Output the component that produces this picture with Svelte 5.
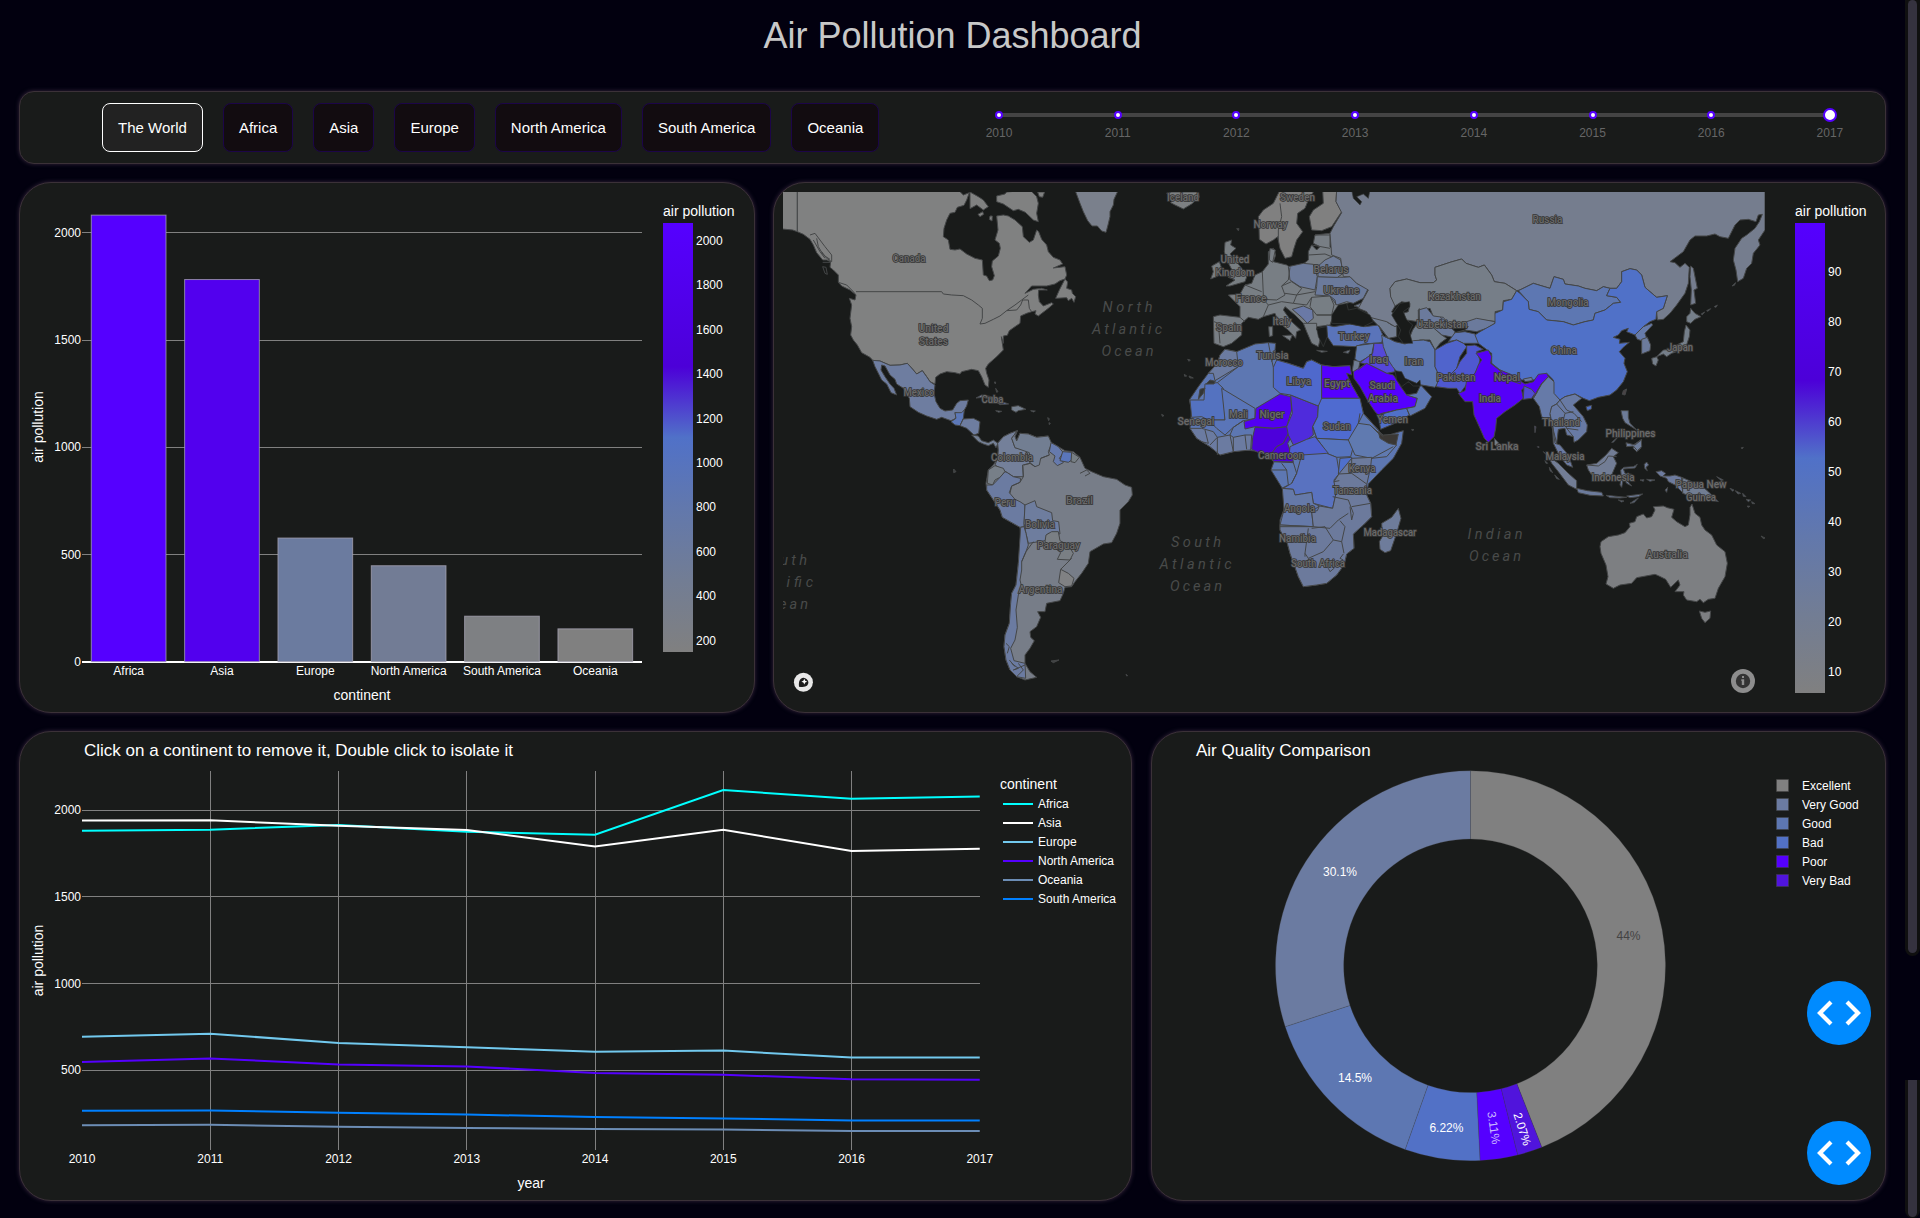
<script>
  const regions = ['The World', 'Africa', 'Asia', 'Europe', 'North America', 'South America', 'Oceania'];
  const years = [2010, 2011, 2012, 2013, 2014, 2015, 2016, 2017];
  let selected = $state('The World');

  // Bar chart
  const y0 = 661.7;
  const perUnit = 0.2147;
  const bars = [
    { name: 'Africa', value: 2080, color: '#5500ff' },
    { name: 'Asia', value: 1780, color: '#5200ee' },
    { name: 'Europe', value: 576, color: '#6b7b9f' },
    { name: 'North America', value: 447, color: '#727c95' },
    { name: 'South America', value: 212, color: '#7e8083' },
    { name: 'Oceania', value: 153, color: '#808080' }
  ];
  const barScale = [2000, 1800, 1600, 1400, 1200, 1000, 800, 600, 400, 200];
  const mapScale = [90, 80, 70, 60, 50, 40, 30, 20, 10];

  // Line chart
  const lx = (i) => 82 + i * 128.25;
  const lines = [
    { name: 'Africa', color: '#00ffff', y: [830.7, 829.7, 825, 831.7, 834.7, 790, 798.7, 796.4] },
    { name: 'Asia', color: '#ffffff', y: [820.5, 820.3, 825.7, 830, 846.6, 829.8, 851, 848.8] },
    { name: 'Europe', color: '#72c9ee', y: [1036.7, 1033.7, 1043, 1047.3, 1051.7, 1050.6, 1057.4, 1057.4] },
    { name: 'North America', color: '#5500ff', y: [1062, 1058.4, 1064.4, 1066.4, 1073, 1074.7, 1079.3, 1079.8] },
    { name: 'Oceania', color: '#6c8db5', y: [1125.3, 1124.7, 1126.7, 1128, 1129, 1129.4, 1131, 1131] },
    { name: 'South America', color: '#0080ff', y: [1110.7, 1110.4, 1112.7, 1114.6, 1117, 1118.4, 1120.4, 1120.4] }
  ];
  const pts = (ys) => ys.map((y, i) => `${lx(i)},${y}`).join(' ');

  // Donut, clockwise from twelve o'clock
  const slices = [
    { n: 85, color: '#808080', label: '44%', x: 1628.5, y: 940, fill: '#444' },
    { n: 4, color: '#5014dc', label: '2.07%', x: 1522.5, y: 1129, rot: 72.1 },
    { n: 6, color: '#5500ff', label: '3.11%', x: 1494, y: 1127.7, rot: 81.5, fill: '#c9b8ff' },
    { n: 12, color: '#5271c6', label: '6.22%', x: 1446.4, y: 1132 },
    { n: 28, color: '#5d77b2', label: '14.5%', x: 1355, y: 1082 },
    { n: 58, color: '#6b7ba1', label: '30.1%', x: 1340, y: 876 }
  ];
  const quality = [
    ['Excellent', '#808080'], ['Very Good', '#6b7ba1'], ['Good', '#5d77b2'],
    ['Bad', '#5271c6'], ['Poor', '#5500ff'], ['Very Bad', '#5014dc']
  ];
  const cx = 1470.5, cy = 965.8, R = 195, r = 126.8;
  let acc = 0;
  const arcs = slices.map((s) => {
    const a = (acc / 193) * 2 * Math.PI;
    acc += s.n;
    const b = (acc / 193) * 2 * Math.PI;
    const p = (q, t) => `${(cx + q * Math.sin(t)).toFixed(2)} ${(cy - q * Math.cos(t)).toFixed(2)}`;
    return { ...s, d: `M${p(R, a)}A${R} ${R} 0 0 1 ${p(R, b)}L${p(r, b)}A${r} ${r} 0 0 0 ${p(r, a)}Z` };
  });

  // Map shapes: each sheet has its own origin and is drawn at three units per pixel
  const sheets = [
    { x: 770, y: 180, shapes: [
      ['#808181', '36,30 82,30 82,155 68,150 36,147'],
      ['#808181', '82,30 565,30 580,45 598,38 590,60 582,76 562,82 555,97 540,100 530,120 522,145 520,170 535,180 540,208 555,210 570,207 590,222 615,235 637,240 640,285 650,288 658,302 668,300 673,287 665,260 667,243 685,228 691,205 688,190 675,180 684,150 680,108 700,105 715,108 735,120 757,140 760,170 778,187 790,180 800,150 806,155 815,178 830,195 835,215 850,232 870,240 878,252 850,264 885,260 890,285 885,297 870,302 855,312 830,318 785,318 765,340 790,328 815,325 832,330 806,330 805,345 808,365 820,378 845,368 850,372 835,385 805,408 795,402 798,392 785,395 770,400 752,408 750,430 735,440 718,452 712,466 700,468 700,490 694,470 700,510 680,530 655,552 647,565 650,580 657,600 655,622 645,615 635,590 625,572 605,568 575,575 570,582 555,578 530,575 510,582 497,592 495,612 480,605 470,590 457,572 440,582 430,570 412,550 390,555 360,556 330,543 308,541 300,532 275,518 262,495 250,480 242,465 245,440 240,415 245,375 238,355 255,360 258,345 240,330 215,318 205,307 205,285 190,270 180,262 182,245 170,240 158,240 140,218 130,195 120,178 100,163 82,155'],
      ['#808181', '885,297 893,306 890,325 905,330 907,340 917,350 912,367 905,355 895,362 890,353 857,355 868,330'],
      ['#808181', '680,48 705,42 710,36 780,30 800,50 805,70 800,100 805,125 790,120 766,97 745,88 730,92 700,72 680,65'],
      ['#808181', '600,36 625,50 640,60 655,80 640,90 620,75 600,86'],
      ['#808181', '803,36 824,36 818,52 808,50'],
      ['#808181', '624,103 638,95 641,103 630,110'], ['#808181', '660,108 667,108 666,123 658,118'],
      ['#7a808c', '915,30 1045,30 1032,58 1030,75 1020,95 1020,110 1014,135 1010,150 1008,157 995,153 982,138 966,138 953,122 940,95 930,70'],
      ['#6e7da0', '308,541 330,543 360,556 390,555 412,550 430,570 440,582 457,572 470,590 480,605 495,615 492,640 498,665 510,685 525,693 548,690 560,670 570,662 595,660 590,678 580,695 575,705 555,697 558,715 543,722 515,712 500,718 470,708 445,697 420,680 418,655 400,625 380,612 375,598 360,585 345,558 335,555 333,570 345,590 360,612 372,625 380,645 363,638 350,612 335,600 325,580 315,560'],
      ['#5c78b8', '543,725 558,715 555,698 575,698 583,690 580,715 570,737 555,735'],
      ['#6e7da0', '570,737 580,717 610,715 630,725 626,760 612,765 590,745'],
      ['#737f94', '605,765 625,768 635,782 655,788 670,780 684,790 678,803 670,790 655,797 640,792 625,785'],
      ['#6d7ba2', '618,654 635,645 665,650 692,664 716,672 690,674 672,662 640,652'],
      ['#75808f', '725,680 745,677 768,688 745,692 738,697 725,690'],
      ['#75808f', '677,692 695,694 686,697'], ['#75808f', '782,692 796,693 790,696'],
      ['#3f4242', '673,606 677,606 676,612'], ['#3f4242', '677,625 684,635 680,637'], ['#3f4242', '833,713 838,716 836,722'], ['#3f4242', '837,728 841,730 838,734']
    ] },
    { x: 770, y: 430, shapes: [
      ['#777d88', '683,40 700,20 720,10 742,2 735,20 740,33 750,10 775,12 800,22 835,18 840,35 865,50 885,62 910,65 930,82 945,115 965,125 1000,140 1040,148 1065,165 1085,172 1087,195 1075,215 1050,240 1050,280 1040,310 1025,338 1000,342 960,365 955,400 935,430 915,455 905,470 885,472 880,490 870,512 830,520 825,545 803,545 812,562 800,590 780,605 782,622 793,632 780,655 765,675 765,700 780,725 800,742 765,750 740,740 720,720 708,690 702,650 705,615 718,580 722,520 725,490 738,465 745,400 752,320 750,292 720,275 697,262 690,240 670,210 650,180 648,160 655,120 670,105 683,85 685,60'],
      ['#74809a', '683,40 700,20 720,10 742,2 725,25 735,53 765,60 778,85 780,100 758,105 760,140 730,140 712,128 675,105 683,85 685,60'],
      ['#727e92', '742,2 735,20 740,33 750,10 775,12 800,22 835,18 845,40 835,65 838,75 812,85 808,105 795,110 780,98 778,68 735,53 725,25'],
      ['#777f88', '655,120 675,107 700,115 705,125 690,142 675,150 668,165 652,160'],
      ['#6b7ba1', '650,165 668,165 690,142 705,125 712,128 730,140 752,145 750,157 725,168 718,188 735,208 750,215 765,225 762,290 750,292 720,275 697,262 690,240 670,210 650,180'],
      ['#6e7d9e', '765,225 795,212 800,230 845,248 848,272 866,275 870,312 835,310 825,332 775,340 768,310 762,280'],
      ['#6b7ba1', '752,292 762,290 768,310 775,345 768,365 755,395 755,420 750,450 756,475 745,495 738,540 742,592 735,630 722,655 732,692 765,700 767,745 740,740 720,720 708,690 702,650 705,615 718,580 722,520 725,490 738,465 745,400'],
      ['#667aad', '843,38 865,50 880,68 868,85 880,98 862,107 850,95 855,78 838,65'],
      ['#5a76bb', '878,65 905,67 905,90 895,97 870,92'],
      ['#777f84', '905,67 928,82 915,98 903,95'],
      ['#808183', '872,418 895,430 912,445 905,468 885,470 866,458'],
      ['#7a7f84', '828,315 845,305 865,305 870,332 895,345 910,370 900,390 862,388 872,368 850,350 825,335'],
      ['#3f4242', '551,117 558,125 551,128'], ['#3f4242', '843,693 867,690 850,698'], ['#3f4242', '1068,733 1073,737 1070,738']
    ] },
    { x: 1130, y: 180, shapes: [
      ['#7d8082', '110,40 125,36 205,36 208,52 185,72 160,87 135,75 122,68 130,58'],
      ['#808080', '545,30 450,30 430,70 400,90 385,110 387,140 388,178 408,192 430,180 443,170 450,205 465,235 485,230 492,205 500,180 518,155 500,130 503,100 525,85 535,60 550,36'],
      ['#808080', '578,30 620,30 618,65 635,95 605,140 575,152 545,150 538,110 550,90 580,70'],
      ['#787e82', '285,187 305,180 302,195 318,205 300,222 315,240 335,265 352,285 345,305 300,318 288,318 315,300 295,292 305,268 290,240 283,215'],
      ['#787e82', '245,258 268,245 275,265 265,288 242,297 250,275'],
      ['#787e84', '295,345 330,342 345,315 365,310 375,285 397,275 415,252 415,215 430,205 437,225 430,245 470,255 480,262 520,252 535,240 535,215 545,195 560,210 570,200 550,190 555,165 600,160 600,200 635,235 640,265 660,290 715,325 700,355 650,370 620,400 605,420 600,435 560,440 560,450 575,460 565,500 545,490 530,455 520,430 495,405 465,380 460,390 485,425 512,450 500,455 497,475 480,455 445,425 435,400 400,410 385,418 355,412 335,430 335,465 305,490 280,500 252,490 250,410 270,405 330,412 330,380 315,365'],
      ['#6d7b9a', '475,260 520,250 550,253 562,290 555,330 510,320 480,300'],
      ['#6b7a9b', '562,290 640,292 660,290 680,310 715,325 700,355 670,370 650,365 620,375 600,348 555,345 560,320'],
      ['#6f7c98', '585,240 610,228 632,240 640,280 622,292 565,290 560,262'],
      ['#777e84', '545,352 600,348 612,375 605,405 560,405 540,380'],
      ['#6a79a6', '487,388 520,378 548,390 550,415 532,430 515,412'],
      ['#787e84', '420,205 436,210 428,247 418,240'],
      ['#787e84', '458,467 487,465 480,482'], ['#787e84', '416,440 428,440 428,467 418,470'],
      ['#787e84', '560,511 592,514 575,517'], ['#737e90', '640,517 660,510 655,520'],
      ['#717c93', '672,378 700,366 690,383'],
      ['#5a74ba', '590,435 612,440 660,432 705,440 745,435 760,468 755,488 700,492 675,500 640,498 610,497 592,470'],
      ['#727d90', '720,412 755,415 785,435 800,440 800,470 775,475 745,437'],
      ['#607ab0', '680,497 732,490 725,525 685,548 675,535'],
      ['#5548d8', '732,490 765,490 775,525 790,545 795,575 770,580 720,555 690,548 728,520'],
      ['#707d92', '667,570 672,540 690,545 685,570 672,580'],
      ['#5500ff', '670,575 710,550 770,580 790,585 800,600 812,620 830,645 862,655 855,680 800,690 755,700 745,705 735,695 715,665 690,620 672,595'],
      ['#5070c8', '745,705 800,690 830,685 838,705 795,730 752,748'],
      ['#5d77b2', '830,645 860,640 872,615 905,650 885,685 840,708 830,685 855,680 862,655'],
      ['#5d77b2', '235,580 262,550 270,525 285,508 320,515 375,492 415,488 437,490 435,510 440,540 475,550 520,565 530,545 545,540 575,555 610,560 660,557 645,575 665,615 690,660 700,700 745,750 760,770 820,752 815,790 790,835 755,870 715,912 710,945 722,970 725,1010 700,1035 670,1062 672,1105 650,1122 642,1155 620,1185 590,1210 560,1215 520,1220 505,1190 480,1120 472,1090 450,1050 450,1020 465,980 460,930 423,870 432,845 395,815 345,810 310,815 270,825 240,800 200,775 180,745 185,690 178,660 205,620'],
      ['#6b7ba1', '235,580 262,550 270,525 285,508 320,515 325,560 255,602 250,580'],
      ['#5472c0', '180,660 222,660 225,612 262,608 280,625 285,720 235,720 215,710 185,712'],
      ['#333534', '205,658 210,628 225,624 220,640'], ['#333534', '228,612 240,600 256,604 252,612'],
      ['#5a75b8', '275,625 375,685 375,715 340,722 310,742 285,765 260,745 235,720 285,720'],
      ['#6b7ba1', '180,745 215,745 250,755 262,772 300,765 310,772 345,765 365,765 362,810 310,815 270,825 240,800 200,775'],
      ['#5200f2', '378,685 450,642 482,650 485,690 470,740 430,745 375,740 345,747 342,725 375,715'],
      ['#4d00db', '375,742 430,745 470,740 478,755 460,790 440,800 425,820 390,820 365,808 368,772'],
      ['#4d00db', '478,755 482,775 473,790 488,835 490,848 430,845 425,820 440,800 460,790'],
      ['#4f2bdc', '482,645 565,678 563,710 548,740 550,765 530,780 490,795 475,765 470,740 487,700'],
      ['#4f69cc', '430,562 440,540 475,550 520,565 530,545 545,540 575,555 575,675 565,678 482,645 450,640 430,622'],
      ['#5500ff', '575,555 610,560 660,557 665,585 650,580 665,615 688,655 575,655'],
      ['#4f6bd0', '575,655 690,655 700,700 685,730 670,765 655,780 560,775 548,740 563,710 565,678'],
      ['#5674be', '560,775 655,780 670,800 662,830 620,832 590,820 575,795'],
      ['#4f60d0', '480,800 530,778 555,770 575,795 595,820 540,828 490,832 478,820'],
      ['#607ab0', '685,730 720,735 750,765 800,795 770,830 725,835 675,825 655,780'],
      ['#3a3734', '745,755 760,765 805,762 798,795 775,790 750,775'],
      ['#5972c0', '515,825 590,820 620,832 628,880 612,900 618,940 608,985 550,970 545,937 515,942 495,945 490,928 460,925 485,910 500,880'],
      ['#4f70cc', '630,835 665,832 660,880 625,882'],
      ['#6579a8', '457,925 490,928 495,945 515,942 545,937 550,970 568,978 545,995 550,1040 450,1035 462,990'],
      ['#6c7a9c', '568,978 608,985 618,940 612,905 628,880 665,835 725,832 722,860 710,915 710,945 722,970 725,1010 700,1035 670,1062 672,1105 650,1122 642,1155 620,1185 590,1210 560,1215 520,1220 505,1190 480,1120 472,1090 450,1050 450,1035 550,1040 545,995 562,992'],
      ['#6e7c9b', '805,985 813,1015 800,1060 782,1112 765,1118 750,1108 748,1085 757,1070 755,1030 785,1012'],
      ['#3f4242', '173,538 181,540 177,544'], ['#3f4242', '163,583 170,588 164,589'], ['#3f4242', '177,588 190,594 180,594'], ['#3f4242', '95,703 102,707 97,709'], ['#3f4242', '320,146 327,146 325,152'], ['#3f4242', '845,748 852,749 847,752']
    ] },
    { x: 1450, y: 180, shapes: [
      ['#757d8e', '-340,30 945,30 945,150 925,180 930,195 910,220 905,250 890,265 880,295 863,305 858,270 850,240 855,205 875,175 890,165 915,145 928,125 937,103 925,105 918,125 895,118 870,120 855,135 835,175 810,170 795,162 770,168 735,168 720,180 700,215 680,230 660,245 675,248 690,262 705,250 718,262 716,290 715,310 705,340 680,375 660,400 640,418 622,420 620,395 640,385 652,347 620,352 600,335 585,322 575,285 560,270 540,266 515,275 515,305 500,325 480,325 460,320 440,332 405,325 385,318 345,312 340,298 312,290 300,325 250,310 210,330 200,332 165,310 133,305 125,285 103,255 85,262 48,250 35,237 0,247 -45,262 -45,285 -40,300 -50,308 -90,308 -130,297 -165,305 -180,325 -178,350 -160,370 -175,395 -150,430 -165,440 -190,425 -240,412 -250,395 -275,385 -245,330 -280,310 -300,290 -320,290 -328,235 -355,225 -360,160 -350,140 -325,98 -342,65'],
      ['#767e88', '-180,325 -165,305 -130,297 -90,308 -50,308 -40,300 -45,285 -45,262 0,247 35,237 48,250 85,262 103,255 125,285 133,305 165,310 200,332 185,358 160,362 158,390 135,395 140,425 80,418 55,440 10,445 -20,415 -50,410 -60,385 -95,390 -95,425 -130,420 -140,400 -125,395 -120,370 -145,365 -165,378 -178,350'],
      ['#6b7a9c', '-95,390 -70,383 -50,408 -20,412 0,440 15,455 10,472 -25,465 -65,430 -92,425'],
      ['#737e8d', '-95,425 -65,430 -25,465 -10,475 -30,490 -45,510 -60,480 -90,480 -115,490 -120,470 -112,450'],
      ['#6b7a9c', '10,440 50,425 80,415 135,425 135,430 110,445 80,455 45,450 55,440'],
      ['#5f76b4', '15,458 45,455 75,462 88,490 40,490 20,480 -5,485'],
      ['#5d77b2', '-205,465 -165,485 -135,492 -110,482 -80,480 -60,485 -45,510 -45,560 -35,582 -30,600 -45,622 -85,615 -110,608 -130,605 -160,575 -172,560 -185,540 -200,500'],
      ['#5064cc', '-45,510 -10,490 20,480 40,490 50,500 30,530 20,565 0,585 -35,582 -45,560'],
      ['#4f58d0', '50,497 75,495 100,508 80,515 90,540 85,560 75,580 60,600 45,620 30,640 20,625 -5,625 -42,620 -35,600 -35,582 0,585 20,565 30,545 50,520'],
      ['#5d77b2', '205,332 250,310 300,325 312,290 340,298 345,312 385,318 405,325 440,332 460,320 480,325 470,347 500,352 512,367 490,370 465,390 435,400 430,420 405,425 370,435 340,425 290,420 265,395 237,388 235,365'],
      ['#5071c8', '200,332 210,340 235,365 237,388 265,395 290,420 340,425 370,435 405,425 430,420 435,400 465,390 490,370 512,367 500,352 470,347 480,325 500,325 515,305 515,275 540,266 560,270 575,285 585,322 600,335 620,352 652,347 640,385 620,395 618,418 600,425 580,440 555,465 530,455 535,445 515,452 505,465 490,472 510,478 508,490 538,487 520,502 508,515 525,535 522,550 532,575 520,605 500,630 480,645 445,652 418,662 400,655 375,642 345,650 330,660 310,640 310,600 290,580 250,600 215,600 180,585 150,570 125,550 125,520 105,505 85,490 75,465 90,455 135,430 135,400 158,390 160,365 185,358'],
      ['#5071c8', '408,680 425,676 424,687 412,692'], ['#4a4446', '520,632 530,627 525,645 517,643'],
      ['#667bab', '555,465 580,440 605,430 608,435 585,460 590,475 575,482 562,478'],
      ['#6c7b9c', '575,478 592,472 602,495 600,512 575,522'],
      ['#757f8a', '722,385 735,400 753,410 735,418 722,430 710,425 710,410 720,400'],
      ['#757f8a', '708,435 720,450 718,470 708,500 690,512 665,520 650,530 640,522 620,530 640,510 665,508 680,495 700,485 703,455'],
      ['#757f8a', '605,535 620,530 625,540 618,558 608,552'],
      ['#757d8e', '722,258 730,265 742,325 732,330 737,370 722,375 724,330 720,290'],
      ['#757f88', '846,318 857,308 853,316'], ['#757f88', '770,392 782,386 774,394'], ['#757f88', '793,380 802,375 798,382'], ['#757f88', '754,402 764,396 757,404'],
      ['#5500f8', '78,520 115,510 125,530 122,550 150,572 165,590 215,605 225,612 250,605 265,583 290,580 295,590 275,610 260,635 252,655 245,635 225,620 215,630 220,655 195,675 165,695 140,715 137,745 132,770 115,787 103,775 90,745 72,705 68,665 45,665 25,640 45,632 50,600 75,580 85,555 95,540'],
      ['#5200f0', '150,570 180,582 213,597 212,612 170,598'],
      ['#6c7ba0', '220,597 245,592 248,602 225,605'],
      ['#504cd0', '222,618 245,628 255,640 245,655 220,658'],
      ['#667aa8', '295,590 312,605 312,640 330,660 320,672 305,680 300,705 310,740 318,780 325,820 312,790 308,750 300,715 290,720 275,710 268,680 250,655 262,635 275,612'],
      ['#687aa4', '330,660 345,650 375,642 395,655 370,675 400,710 412,735 410,755 385,780 372,787 370,770 350,765 345,745 325,748 320,790 310,750 300,700 305,680 320,672'],
      ['#74808c', '133,775 147,790 140,800 134,795'],
      ['#6e7c98', '513,692 535,692 535,712 540,730 560,750 525,728 518,715'], ['#6e7c98', '550,795 575,778 572,805 560,815 550,805'],
      ['#6e7c98', '485,787 507,768 490,787'],
      ['#4a3a88', '254,738 258,740 255,758'], ['#4a3a88', '262,800 267,800 266,804']
    ] },
    { x: 1500, y: 430, shapes: [
      ['#727d95', '130,65 150,82 175,100 205,130 230,152 230,178 205,165 175,125 155,100 145,80'],
      ['#6a7aa2', '158,-10 165,40 180,45 205,75 218,112 200,105 180,80 160,40'],
      ['#6c7b9c', '230,175 262,182 305,187 310,198 270,196 235,188'],
      ['#727d95', '260,105 290,100 318,75 335,55 355,68 340,80 350,100 335,135 300,145 275,135 265,120'],
      ['#6e7c98', '378,38 405,45 424,30 425,50 412,62 400,48 380,50'],
      ['#6c7a98', '362,120 372,112 400,110 412,103 405,114 370,117 375,130 395,133 378,138 380,150 395,168 380,160 370,145 365,172 360,165 364,140'],
      ['#6c7a98', '318,196 340,198 360,200 380,202 360,204 330,203'], ['#6c7a98', '380,198 428,192 415,200 390,203'], ['#6c7a98', '390,220 405,210 415,204 402,218'], ['#6c7a98', '355,210 372,213 365,216'],
      ['#6c7a98', '433,103 440,96 446,105 438,112 442,122 434,115'], ['#6c7a98', '420,150 432,149 430,154'], ['#6c7a98', '440,148 465,150 450,154'], ['#6c7a98', '495,180 503,172 500,187'],
      ['#6d7b9e', '468,125 485,122 497,130 490,138 510,138 525,135 545,142 548,188 525,165 505,155 500,145 480,138'],
      ['#717d92', '545,142 575,155 610,172 625,185 655,215 630,210 600,192 570,198 548,190'],
      ['#6c7a98', '625,160 655,165 665,150 668,158 650,172'], ['#6c7a98', '650,140 670,150 662,150'],
      ['#626c7c', '690,175 702,180 698,184'], ['#626c7c', '706,182 722,190 714,192'], ['#626c7c', '728,190 738,200 730,199'], ['#626c7c', '738,208 752,210 745,215'], ['#626c7c', '755,215 765,221 757,221'], ['#626c7c', '742,228 750,229 744,232'],
      ['#3f4242', '783,318 795,324 790,326'], ['#3f4242', '724,53 730,52 726,57'],
      ['#626c7c', '135,92 143,100 138,100'], ['#626c7c', '148,112 158,128 150,122'], ['#626c7c', '164,135 178,148 170,146'],
      ['#7d7f82', '303,335 325,320 355,315 375,308 390,290 388,280 405,275 410,260 430,252 440,264 455,260 465,240 460,230 490,228 502,233 522,238 515,262 530,275 555,290 565,285 570,255 570,232 576,222 585,250 600,262 605,285 615,300 635,315 650,345 675,365 682,400 675,440 655,475 645,505 625,508 610,518 600,508 590,515 560,510 550,495 552,485 525,485 540,465 535,450 512,472 497,448 475,437 465,433 410,443 395,460 360,465 340,475 318,462 324,440 318,405 303,370 300,350'],
      ['#7d7f82', '598,543 615,547 632,543 630,565 615,578 605,565']
    ] }
  ];

  // Land borders that cross a filled shape, and inland or coastal water laid over it
  const borders = [
    { x: 770, y: 180, d: 'M258 335H515L520 342 545 345 580 347 605 360 625 375 637 385V415L630 432 645 430 670 418 690 408 710 392 735 375 755 360 775 345M710 392 740 390 752 375 758 360 775 360 778 385 785 395M120 165 135 160 150 180 165 200 185 225V245L170 235 155 215M130 180 150 215 165 235M140 175 145 200 160 225 180 238M205 307 230 315 250 335 258 345M158 260 165 280 172 283 168 262ZM158 247H182' },
    { x: 770, y: 430, d: 'M762 105 780 100 795 110M812 85 838 75M720 190 725 168 750 157 760 140 758 105M755 395 768 365 790 335M872 418 905 385M930 130 950 120 960 130 945 138M725 700 745 715 730 720 765 705M740 740 760 720 745 700M708 640 718 650 712 670M718 690 735 710' },
    { x: 1130, y: 180, d: 'M450 70 455 110 445 150 445 180M480 262 475 300 455 318 465 345 440 360 400 358M397 275 400 345 415 360M345 315 395 335M400 358 415 375 400 410M270 490 265 430 252 425M330 412 345 425M455 318 485 305 515 325 500 345 465 340M500 345 555 335M415 375 455 365 490 370M490 370 500 345M490 370 530 375 545 352M535 225 585 222 605 230M545 195 600 205M560 405 605 405M520 430 560 430 560 440M555 165 600 165M600 348 615 360 618 375M415 488 425 540 430 562M437 510 425 545M262 608 325 560M310 772V815M300 765 310 815M345 765 350 808M262 772V825M225 750 235 790 215 785M262 772 240 795M300 765 310 742 340 722M423 870 470 870 475 915 455 925M430 845H490M490 848 500 880 485 910M470 870 455 850M625 882 665 880 710 912M665 835 665 880M612 905 628 902M608 950 655 960 670 1000 665 1020 660 980M665 980 722 970M550 1040 600 1045 625 1020 655 1000M550 1040H450M535 1045 525 1120V1130M545 1045 585 1040 610 1080 635 1085 645 1040 630 1022M525 1120 535 1135 580 1115 610 1080M635 1085 642 1120M640 1122 630 1135 640 1140M595 1165 605 1155 612 1165 600 1175ZM745 435 775 475 760 468M685 570 710 550M700 700 745 750M720 735 760 770M725 835 790 800M548 740 560 775M690 700 685 730' },
    { x: 1450, y: 180, d: 'M330 660 350 690 372 700 395 725M320 672 345 700 340 720 350 745 385 750M345 700 370 695M350 745 370 770M250 655 262 635M-30 412 10 440M15 458 45 450M-92 425V385' },
    { x: 1500, y: 430, d: 'M260 105 295 108 315 95 325 78 350 80M548 142V190' }
  ];
  const water = [
    { x: 1130, y: 180, p: '665,30 670,55 690,75 695,65 680,50 700,42 715,55 720,30' },
    { x: 1130, y: 180, p: '605,430 605,405 625,375 650,370 655,390 680,385 720,405 730,425 700,440 660,432' },
    { x: 1130, y: 180, p: '785,405 810,370 838,365 840,380 820,395 830,420 848,435 838,455 848,490 820,490 805,470 812,450' },
    { x: 1130, y: 180, p: '560,445 590,440 592,470 580,500 565,470' },
    { x: 1130, y: 180, p: '795,572 815,575 825,595 860,610 870,600 872,618 850,618 835,605 815,620 800,600' }
  ];

  const places = [
    ['Canada', 909, 261.5, 33], ['United', 933.5, 332, 30], ['States', 933.5, 344.5, 29], ['Mexico', 919, 395.5, 31], ['Cuba', 992.5, 402.5, 22],
    ['Colombia', 1012, 461, 42], ['Peru', 1005, 505.5, 21], ['Brazil', 1079.5, 504, 27], ['Bolivia', 1040, 528, 30], ['Paraguay', 1058.5, 549, 43], ['Argentina', 1040.5, 593, 44],
    ['Iceland', 1183, 201, 32], ['Sweden', 1297.5, 201, 35], ['Norway', 1270.5, 227.5, 34], ['United', 1235, 263, 29], ['Kingdom', 1235, 275.5, 39], ['Belarus', 1331, 273, 35],
    ['Ukraine', 1341.5, 294, 36], ['France', 1251, 301.5, 31], ['Spain', 1229, 330.5, 26], ['Italy', 1282, 325, 19], ['Turkey', 1354, 339.5, 31], ['Tunisia', 1272.5, 359, 32],
    ['Morocco', 1224, 365.5, 38], ['Libya', 1299, 385, 25], ['Egypt', 1337, 387, 26], ['Saudi', 1382.5, 389, 26], ['Arabia', 1383, 401.5, 30], ['Iraq', 1379, 363, 19], ['Iran', 1414, 365, 19],
    ['Pakistan', 1456, 381, 39], ['Kazakhstan', 1454.5, 299.5, 53], ['Uzbekistan', 1442, 328, 51], ['Mali', 1238.5, 417.5, 19], ['Niger', 1272, 417.5, 25], ['Senegal', 1196, 425, 37],
    ['Sudan', 1337, 429.5, 28], ['Yemen', 1392.5, 423, 31], ['Russia', 1547.5, 222.5, 30], ['Mongolia', 1568, 306, 41], ['China', 1564, 353.5, 26], ['Nepal', 1507, 380.5, 26],
    ['India', 1490, 401.5, 22], ['Sri Lanka', 1497, 450, 43], ['Thailand', 1561, 425.5, 38], ['Philippines', 1630.5, 436.5, 50], ['Japan', 1680, 350.5, 26],
    ['Malaysia', 1565, 459.5, 39], ['Indonesia', 1613, 481, 43], ['Papua New', 1701, 488, 51], ['Guinea', 1701, 500.5, 30], ['Australia', 1667, 558, 42],
    ['Cameroon', 1281, 458.5, 46], ['Kenya', 1362, 472, 27], ['Tanzania', 1352.5, 493.5, 39], ['Angola', 1299.5, 512, 31], ['Namibia', 1297.5, 542, 37], ['South Africa', 1318, 567, 54], ['Madagascar', 1390, 536, 53]
  ];
  const seas = [
    ['North', 1127.5, 312, 50], ['Atlantic', 1127, 334, 70], ['Ocean', 1127.5, 356, 52],
    ['South', 1196, 547, 50], ['Atlantic', 1195.5, 569, 72], ['Ocean', 1196, 591, 52],
    ['Indian', 1495, 539, 55], ['Ocean', 1495, 561, 52],
    ['South', 782, 565, 50], ['Pacific', 782, 587, 62], ['Ocean', 782, 609, 52]
  ];
</script>

{#snippet colorScale(id)}
  <linearGradient {id} x1="0" y1="1" x2="0" y2="0">
    <stop offset="0" stop-color="#808080" />
    <stop offset=".167" stop-color="#727d94" />
    <stop offset=".333" stop-color="#6278ac" />
    <stop offset=".5" stop-color="#5071c8" />
    <stop offset=".665" stop-color="#4c00d8" />
    <stop offset="1" stop-color="#5500ff" />
  </linearGradient>
{/snippet}

<div class="shell">
  <main>
    <h1>Air Pollution Dashboard</h1>

    <section class="panel filters">
      <div class="regions">
        {#each regions as name}
          <button class:active={selected === name} onclick={() => (selected = name)}>{name}</button>
        {/each}
      </div>
      <div class="slider">
        {#each years as year}
          <div class="stop" class:current={year === 2017}><i></i><span>{year}</span></div>
        {/each}
      </div>
    </section>

    <div class="row top">
      <section class="panel">
        <svg viewBox="20 183 734 529" width="734" height="529">
          <defs>{@render colorScale('bar-scale')}</defs>
          {#each [2000, 1500, 1000, 500] as v}
            <line class="grid" x1="82" x2="642" y1={Math.round(y0 - v * perUnit) + 0.5} y2={Math.round(y0 - v * perUnit) + 0.5} />
            <text class="tick" x="81" y={y0 - v * perUnit + 4.3} text-anchor="end">{v}</text>
          {/each}
          <line x1="82" x2="642" y1="662" y2="662" stroke="#fff" stroke-width="2" />
          <text class="tick" x="81" y="666" text-anchor="end">0</text>
          {#each bars as b, i}
            <rect x={91.3 + i * 93.33} y={y0 - b.value * perUnit} width="74.7" height={b.value * perUnit} fill={b.color} stroke="#a8a6b6" stroke-opacity=".75" />
            <text class="tick" x={128.7 + i * 93.33} y="675" text-anchor="middle">{b.name}</text>
          {/each}
          <text class="axis" x="362" y="700" text-anchor="middle">continent</text>
          <text class="axis" transform="translate(42.5 427) rotate(-90)" text-anchor="middle">air pollution</text>
          <text class="axis" x="663" y="216">air pollution</text>
          <rect x="663" y="223" width="30" height="429" fill="url(#bar-scale)" />
          {#each barScale as v, i}
            <text class="tick" x="696" y={244.8 + i * 44.44}>{v}</text>
          {/each}
        </svg>
      </section>

      <section class="panel">
        <svg viewBox="774 183 1111 529" width="1111" height="529">
          <defs>
            {@render colorScale('map-scale')}
            <clipPath id="map-area"><rect x="783" y="192" width="982" height="501" /></clipPath>
          </defs>
          <g clip-path="url(#map-area)">
            {#each sheets as s}
              <g class="land" transform="translate({s.x} {s.y}) scale(.33333)">
                {#each s.shapes as [color, points]}
                  <polygon {points} fill={color} />
                {/each}
              </g>
            {/each}
            {#each water as w}
              <polygon class="water" points={w.p} transform="translate({w.x} {w.y}) scale(.33333)" />
            {/each}
            {#each borders as b}
              <path class="border" d={b.d} transform="translate({b.x} {b.y}) scale(.33333)" />
            {/each}
            {#each seas as [name, x, y, w]}
              <text class="sea" {x} {y} textLength={w} text-anchor="middle">{name}</text>
            {/each}
            {#each places as [name, x, y, w]}
              <text class="place" {x} {y} textLength={w} lengthAdjust="spacingAndGlyphs" text-anchor="middle">{name}</text>
            {/each}
          </g>
          <circle cx="803.4" cy="682.3" r="9.5" fill="#e8e8e8" />
          <path d="M799 686.7c-.5-4 .3-6.4 1.6-7.7a4.7 4.7 0 0 1 6.6 6.6c-1.5 1.4-4.3 1.7-8.2 1.1Z" fill="#1c1c1c" />
          <path d="M804.3 678.8l.9 2 2 .9-2 .9-.9 2-.9-2-2-.9 2-.9Z" fill="#fff" />
          <circle cx="1743" cy="681" r="12" fill="#8d8d8d" />
          <circle cx="1743" cy="681" r="7.2" fill="#333" />
          <path d="M1742 676h2v2h-2ZM1741.3 679.3h2.9v5.7h-2.4v-4h-.5Z" fill="#8d8d8d" />
          <text class="axis" x="1795" y="216">air pollution</text>
          <rect x="1795" y="223" width="30" height="470" fill="url(#map-scale)" />
          {#each mapScale as v, i}
            <text class="tick" x="1828" y={276 + i * 50}>{v}</text>
          {/each}
        </svg>
      </section>
    </div>

    <div class="row bottom">
      <section class="panel">
        <svg viewBox="20 732 1111 468" width="1111" height="468">
          <text class="title" x="84" y="756">Click on a continent to remove it, Double click to isolate it</text>
          {#each years as year, i}
            {#if i > 0 && i < 7}
              <line class="grid" x1={Math.floor(lx(i)) + 0.5} x2={Math.floor(lx(i)) + 0.5} y1="771" y2="1150" />
            {/if}
            <text class="tick" x={lx(i)} y="1163" text-anchor="middle">{year}</text>
          {/each}
          {#each [2000, 1500, 1000, 500] as v, i}
            <line class="grid" x1="82" x2="980" y1={[810.5, 896.5, 983.5, 1070.5][i]} y2={[810.5, 896.5, 983.5, 1070.5][i]} />
            <text class="tick" x="81" y={814.3 + i * 86.7} text-anchor="end">{v}</text>
          {/each}
          {#each lines as l, i}
            <polyline points={pts(l.y)} fill="none" stroke={l.color} stroke-width="2" />
            <line x1="1003" x2="1033" y1={804 + i * 19} y2={804 + i * 19} stroke={l.color} stroke-width="2" />
            <text class="tick" x="1038" y={808 + i * 19}>{l.name}</text>
          {/each}
          <text class="axis" x="1000" y="789">continent</text>
          <text class="axis" x="531" y="1188" text-anchor="middle">year</text>
          <text class="axis" transform="translate(42.5 960.5) rotate(-90)" text-anchor="middle">air pollution</text>
        </svg>
      </section>

      <section class="panel">
        <svg viewBox="1152 732 733 468" width="733" height="468">
          <text class="title" x="1196" y="756">Air Quality Comparison</text>
          {#each arcs as a}
            <path d={a.d} fill={a.color} stroke="#444" stroke-opacity=".35" stroke-width=".7" />
          {/each}
          {#each arcs as a}
            {#if a.rot}
              <text class="tick" transform="translate({a.x} {a.y}) rotate({a.rot})" y="4.3" text-anchor="middle" fill={a.fill ?? '#fff'}>{a.label}</text>
            {:else}
              <text class="tick" x={a.x} y={a.y} text-anchor="middle" fill={a.fill ?? '#fff'}>{a.label}</text>
            {/if}
          {/each}
          {#each quality as [name, color], i}
            <rect x="1776.5" y={779.5 + i * 19} width="12" height="12" fill={color} stroke="#444" stroke-opacity=".5" />
            <text class="tick" x="1802" y={790 + i * 19}>{name}</text>
          {/each}
        </svg>
        <div class="tools">
          {#each [0, 1] as k}
            <button class="tool" aria-label="Toggle tools">
              <svg viewBox="0 0 64 64" width="64" height="64"><path d="M24 21 13 32l11 11M40 21l11 11-11 11" /></svg>
            </button>
          {/each}
        </div>
      </section>
    </div>
  </main>

  <div class="scroll">
    <div class="track"><i></i></div>
    <div class="track lower"><i></i></div>
  </div>
</div>

<style>
  :global(body) { background: #02000f; overflow: hidden; }
  .shell {
    display: flex;
    width: 1920px;
    height: 1218px;
    background: #02000f;
    font-family: 'Liberation Sans', Arial, sans-serif;
  }
  main { width: 1867px; padding: 0 19px; box-sizing: content-box; }
  h1 {
    margin: 0;
    height: 91px;
    line-height: 71px;
    font-size: 36px;
    font-weight: 400;
    text-align: center;
    color: #c8c8c8;
  }
  .panel {
    box-sizing: border-box;
    background: #191b1a;
    border: 1px solid #3b3138;
    border-radius: 32px;
    box-shadow: 0 0 4px #35263c;
  }
  .panel > svg { display: block; }
  .filters {
    display: flex;
    align-items: flex-start;
    justify-content: space-between;
    height: 73px;
    padding: 11px 39px 0 82px;
    border-radius: 15px;
  }
  .regions { display: flex; gap: 20px; }
  .regions button {
    height: 49px;
    padding: 0 15px;
    border: 1px solid #1c0548;
    border-radius: 8px;
    background: #120c10;
    color: #fff;
    font: 15px 'Liberation Sans', Arial, sans-serif;
  }
  .regions .active { background: #222; border-color: #fff; }
  .slider {
    display: flex;
    justify-content: space-between;
    width: 863px;
    background: linear-gradient(#444, #444) 16px 10px / 831px 4px no-repeat;
  }
  .stop {
    width: 32px;
    height: 40px;
    display: flex;
    flex-direction: column;
    align-items: center;
    color: #666;
    font-size: 12px;
    line-height: 14px;
  }
  .stop i {
    box-sizing: border-box;
    width: 8px;
    height: 8px;
    margin: 8px 0 7px;
    border: 2px solid #5500ff;
    border-radius: 50%;
    background: #fff;
  }
  .current i { width: 14px; height: 14px; margin: 5px 0 4px; }
  .row { display: flex; justify-content: space-between; }
  .top { margin-top: 18px; height: 531px; }
  .top .panel:first-child { width: 736px; }
  .top .panel:last-child { width: 1113px; }
  .bottom { margin-top: 18px; height: 470px; }
  .bottom .panel:first-child { width: 1113px; }
  .bottom .panel:last-child { width: 735px; position: relative; }

  text { fill: #fff; }
  .tick { font-size: 12px; }
  .tick[fill] { fill: attr(fill); fill: revert-layer; }
  .axis { font-size: 14px; }
  .title { font-size: 17px; }
  .grid { stroke: #808080; stroke-width: 1; }
  .land polygon, .border { stroke: #444647; stroke-width: 3; stroke-linejoin: round; }
  .border { fill: none; }
  .water { fill: #191b1a; stroke: #3a3c3c; stroke-width: 2; }
  .place {
    font: 500 10.5px Roboto, sans-serif;
    fill: #6a6a6a;
    stroke: #343434;
    stroke-width: 1.6px;
    paint-order: stroke;
  }
  .sea { font: italic 14.5px Roboto, sans-serif; fill: #494b4a; }

  .tools {
    position: absolute;
    right: 14px;
    bottom: 15px;
    display: flex;
    flex-direction: column;
    gap: 76px;
  }
  .tool {
    width: 64px;
    height: 64px;
    padding: 0;
    border: 0;
    border-radius: 50%;
    background: #008bff;
  }
  .tool svg { display: block; }
  .tool path { fill: none; stroke: #fff; stroke-width: 4.2; }

  .scroll { width: 15px; display: flex; flex-direction: column; justify-content: space-between; }
  .track {
    height: 956px;
    box-sizing: border-box;
    padding: 0 3px 3px;
    background: #101010;
    border-radius: 0 0 8px 8px;
  }
  .track i { display: block; height: 100%; background: #35323f; border-radius: 4.5px; }
  .lower { height: 138px; padding-bottom: 1px; }
  .lower i { border-radius: 0 0 4.5px 4.5px; }
</style>
